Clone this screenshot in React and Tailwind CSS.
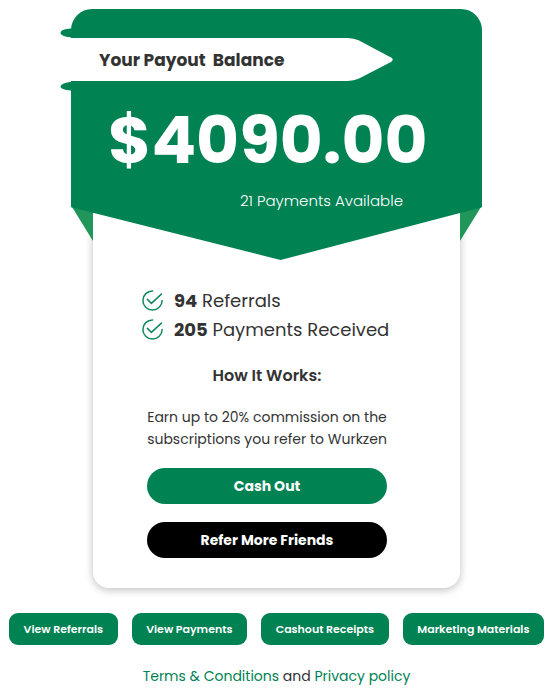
const STATS = [
  { id: 'referrals', value: 94, label: 'Referrals' },
  { id: 'payments', value: 205, label: 'Payments Received' },
];

const ACTIONS = ['View Referrals', 'View Payments', 'Cashout Receipts', 'Marketing Materials'];

// ── Icons ──────────────────────────────────────────────────────────────────────
function CheckIcon() {
  return (
    <svg
      className="size-[21px] shrink-0 text-[#0d8a5c]"
      viewBox="0 0 21 21"
      fill="none"
      stroke="currentColor"
      strokeWidth="1.5"
      strokeLinecap="round"
      strokeLinejoin="round"
      aria-hidden="true"
    >
      <path d="M10.6 0.9A9.6 9.6 0 1 0 20.1 10.5" />
      <path d="M5.4 9.4L9.4 13.4L19.4 4.1" />
    </svg>
  );
}

// ── Ribbon ─────────────────────────────────────────────────────────────────────
function Ribbon({ children }) {
  return (
    <div className="relative flex h-[43px] w-[322px] items-center pl-7">
      <svg
        className="absolute -top-[10px] -left-[11px] h-[63px] w-[333px]"
        viewBox="-11 -10 333 63"
        aria-hidden="true"
      >
        {/* curled ends */}
        <path d="M0 -9.5C-7 -9 -10.5 -7.5 -10.5 -5C-10.5 -2 -3 0 14 0H20V-9.5Z" fill="#008253" />
        <path d="M0 52.5C-7 52 -10.5 50.5 -10.5 48.5C-10.5 45.5 -3 43 14 43H20V52.5Z" fill="#008253" />
        <path
          d="M-11 0H274C281 0 285 1 289 3L320 19.5Q323.5 21.7 320 23.9L289 40C285 42 281 43 274 43H-11Z"
          fill="#fff"
        />
      </svg>
      <h1 className="relative text-[17px] leading-6 font-bold whitespace-pre text-[#333]">{children}</h1>
    </div>
  );
}

// ── Header ─────────────────────────────────────────────────────────────────────
function PayoutHeader() {
  return (
    <header className="relative z-10 h-[251px] pt-[29px]">
      {/* folds behind the banner */}
      <div className="absolute top-[198px] left-px h-[34px] w-[21px] bg-[#20965b] [clip-path:polygon(0_0,100%_0,100%_100%)]" />
      <div className="absolute top-[198px] right-px h-[34px] w-[21px] bg-[#20965b] [clip-path:polygon(0_0,100%_0,0_100%)]" />
      <div className="absolute inset-0 rounded-t-[21px] bg-[#008253] [clip-path:polygon(0_0,100%_0,100%_79%,51%_100%,0_79%)]" />

      <Ribbon>{'Your Payout  Balance'}</Ribbon>
      <p className="relative mt-[26px] pl-[37px] text-[66px] leading-[66px] font-bold text-white">$4090.00</p>
      <p className="relative mt-4 pr-[79px] text-right text-[15px] leading-6 font-light text-white">
        21 Payments Available
      </p>
    </header>
  );
}

// ── Page ───────────────────────────────────────────────────────────────────────
export default function App() {
  return (
    <main className="bg-white pt-[9px] pb-2 font-[Poppins,Inter,sans-serif] text-[#333]">
      <div className="mx-auto max-w-[411px]">
        <PayoutHeader />

        <section className="mx-[22px] -mt-[50px] rounded-b-2xl bg-white pt-[76px] pr-[73px] pb-[30px] pl-[54px] shadow-[0_2px_8px_rgba(0,0,0,0.25)]">
          <ul className="-ml-[5px]">
            {STATS.map((stat) => (
              <li key={stat.id} className="flex items-center gap-[11px] text-lg leading-[29px] whitespace-nowrap">
                <CheckIcon />
                <span>
                  <strong className="font-bold">{stat.value}</strong> {stat.label}
                </span>
              </li>
            ))}
          </ul>

          <h2 className="mt-5 text-center text-base leading-6 font-semibold">How It Works:</h2>
          <p className="mt-[18px] text-center text-sm leading-[22px] whitespace-nowrap">
            Earn up to 20% commission on the
            <br />
            subscriptions you refer to Wurkzen
          </p>

          <button type="button" className="mt-[18px] h-9 w-full rounded-full bg-[#008253] text-sm font-bold text-white">
            Cash Out
          </button>
          <button type="button" className="mt-[18px] h-9 w-full rounded-full bg-black text-sm font-bold text-white">
            Refer More Friends
          </button>
        </section>
      </div>

      <nav className="mx-[9px] mt-[25px] flex gap-[14px]" aria-label="Payout actions">
        {ACTIONS.map((action) => (
          <button
            key={action}
            type="button"
            className="h-8 flex-auto rounded-[9px] bg-[#008253] text-[11px] font-semibold whitespace-nowrap text-white"
          >
            {action}
          </button>
        ))}
      </nav>

      <footer className="mt-5 text-center text-sm leading-[22px]">
        <a href="#terms" className="text-[#008253]">Terms &amp; Conditions</a> and{' '}
        <a href="#privacy" className="text-[#008253]">Privacy policy</a>
      </footer>
    </main>
  );
}
